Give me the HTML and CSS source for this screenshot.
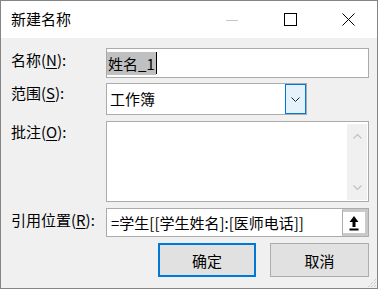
FILE: index.html
```html
<!DOCTYPE html>
<html lang="zh-CN">
<head>
    <meta charset="UTF-8">
    <title>新建名称</title>
    <link rel="stylesheet" href="styles.css">
</head>
<body>
    <div class="window">
        <div class="titlebar">
            <span class="title">新建名称</span>
            <div class="controls">
                <span class="ctl">
                    <svg width="12" height="12" viewBox="0 0 12 12"><line x1="0" y1="6.5" x2="12" y2="6.5" stroke="#c6c6c6" stroke-width="1"/></svg>
                </span>
                <span class="ctl">
                    <svg width="13" height="13" viewBox="0 0 13 13"><rect x="0.5" y="0.5" width="12" height="12" fill="none" stroke="#000" stroke-width="1"/></svg>
                </span>
                <span class="ctl">
                    <svg width="13" height="13" viewBox="0 0 13 13"><path d="M0.5 0.5 L12.5 12.5 M12.5 0.5 L0.5 12.5" stroke="#000" stroke-width="1"/></svg>
                </span>
            </div>
        </div>

        <div class="content">
            <div class="row row-name">
                <label>名称(<u>N</u>):</label>
                <div class="field">
                    <span class="selected">姓名_1</span><span class="caret"></span>
                </div>
            </div>

            <div class="row row-scope">
                <label>范围(<u>S</u>):</label>
                <div class="field combo">
                    <span class="combo-text">工作簿</span>
                    <span class="drop-btn">
                        <svg width="9" height="5" viewBox="0 0 9 5"><path d="M0.5 0.5 L4.5 4.5 L8.5 0.5" fill="none" stroke="#222" stroke-width="1"/></svg>
                    </span>
                </div>
            </div>

            <div class="row row-comment">
                <label>批注(<u>O</u>):</label>
                <div class="field memo">
                    <div class="scrollbar">
                        <svg width="9" height="5" viewBox="0 0 9 5"><path d="M0.5 4.5 L4.5 0.5 L8.5 4.5" fill="none" stroke="#c2c2c2" stroke-width="1.2"/></svg>
                        <svg width="9" height="5" viewBox="0 0 9 5"><path d="M0.5 0.5 L4.5 4.5 L8.5 0.5" fill="none" stroke="#c2c2c2" stroke-width="1.2"/></svg>
                    </div>
                </div>
            </div>

            <div class="row row-ref">
                <label>引用位置(<u>R</u>):</label>
                <div class="field ref">
                    <span class="ref-text">=学生[[学生姓名]:[医师电话]]</span>
                    <span class="pick-btn">
                        <svg width="10" height="16" viewBox="0 0 10 16"><path d="M5 1 L9.5 7 L6.5 7 L6.5 12 L3.5 12 L3.5 7 L0.5 7 Z" fill="#000"/><rect x="0.5" y="13.5" width="9" height="2" fill="#000"/></svg>
                    </span>
                </div>
            </div>

            <div class="buttons">
                <button class="btn btn-default">确定</button>
                <button class="btn">取消</button>
            </div>
        </div>

        <svg class="grip" width="11" height="11" viewBox="0 0 11 11">
            <path d="M10 2 L2 10 M10 5 L5 10 M10 8 L8 10" stroke="#b8b8b8" stroke-width="1" stroke-dasharray="1 1"/>
        </svg>
    </div>
</body>
</html>
```

FILE: styles.css
```css
body {
    margin: 0;
    padding: 0;
    font-family: "Noto Sans CJK SC", "Noto Sans", sans-serif;
    font-size: 15px;
    color: #000;
}

.window {
    position: relative;
    width: 378px;
    height: 289px;
    box-sizing: border-box;
    border: 1px solid #858585;
    background-color: #f0f0f0;
}

.titlebar {
    display: flex;
    justify-content: space-between;
    align-items: center;
    height: 37px;
    background-color: #fff;
}

.title {
    padding-left: 10px;
    line-height: 20px;
    margin-top: -1px;
}

.controls {
    display: flex;
    height: 100%;
}

.ctl {
    display: flex;
    align-items: center;
    justify-content: center;
    width: 58px;
    height: 100%;
}

.content {
    padding: 10px 8px 0 10px;
}

.row {
    display: flex;
    align-items: flex-start;
}

.row label {
    width: 95px;
    flex-shrink: 0;
    line-height: 20px;
}

.row u {
    text-underline-offset: 2px;
}

.field {
    flex: 1;
    box-sizing: border-box;
    border: 1px solid #ababab;
    background-color: #fff;
    display: flex;
    align-items: center;
}

.row-name .field {
    height: 30px;
}

.row-name label {
    padding-top: 2px;
}

.selected {
    background-color: #c0c0c0;
    line-height: 23px;
    padding-left: 1px;
    padding-right: 1px;
}

.caret {
    width: 1px;
    height: 22px;
    background-color: #000;
}

.row-scope {
    margin-top: 5px;
}

.combo {
    flex: none;
    width: 201px;
    height: 32px;
    justify-content: space-between;
}

.combo-text {
    padding-left: 3px;
    line-height: 20px;
}

.drop-btn {
    display: flex;
    align-items: center;
    justify-content: center;
    width: 21px;
    height: 30px;
    box-sizing: border-box;
    border: 1px solid #0078d7;
    background-color: #e5f1fb;
}

.row-comment {
    margin-top: 6px;
}

.row-comment label {
    padding-top: 1px;
}

.memo {
    height: 81px;
    justify-content: flex-end;
    align-items: stretch;
    padding: 2px 1px 1px 0;
}

.scrollbar {
    width: 20px;
    background-color: #f0f0f0;
    display: flex;
    flex-direction: column;
    justify-content: space-between;
    align-items: center;
    padding: 10px 0 10px;
}

.row-ref {
    margin-top: 6px;
}

.row-ref label {
    padding-top: 2px;
}

.ref {
    height: 29px;
    justify-content: space-between;
    align-items: stretch;
}

.ref-text {
    padding-left: 4px;
    line-height: 27px;
}

.pick-btn {
    display: flex;
    align-items: center;
    justify-content: center;
    width: 26px;
    box-sizing: border-box;
    border: 3px solid #c9c9c9;
    border-left: 1px solid #ababab;
    background-color: #fff;
}

.buttons {
    display: flex;
    justify-content: flex-end;
    gap: 14px;
    margin-top: 6px;
}

.btn {
    width: 99px;
    height: 34px;
    box-sizing: border-box;
    border: 1px solid #adadad;
    background-color: #e1e1e1;
    font-family: inherit;
    font-size: 15px;
    color: #000;
    padding: 0;
}

.btn-default {
    width: 98px;
    border: 2px solid #0078d7;
}

.grip {
    position: absolute;
    right: 0;
    bottom: 0;
}
```
